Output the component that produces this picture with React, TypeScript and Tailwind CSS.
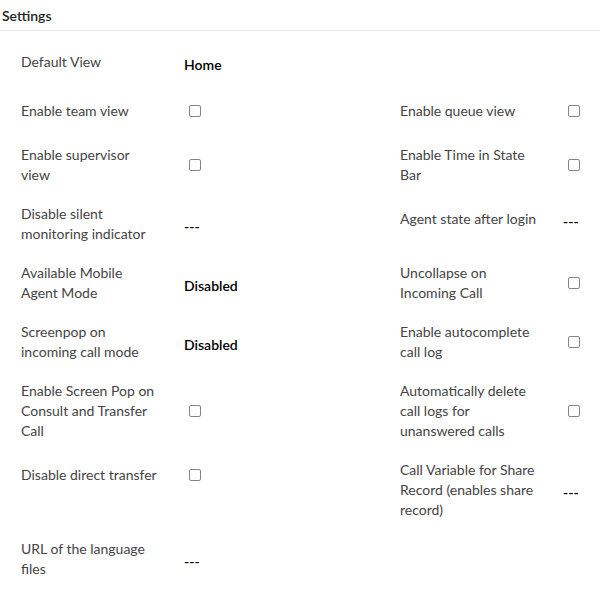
import React from 'react'

type Setting = {
  label: string
  value?: string
  checkbox?: boolean
}

const left: Setting[] = [
  { label: 'Default View', value: 'Home' },
  { label: 'Enable team view', checkbox: true },
  { label: 'Enable supervisor view', checkbox: true },
  { label: 'Disable silent monitoring indicator', value: '---' },
  { label: 'Available Mobile Agent Mode', value: 'Disabled' },
  { label: 'Screenpop on incoming call mode', value: 'Disabled' },
  { label: 'Enable Screen Pop on Consult and Transfer Call', checkbox: true },
  { label: 'Disable direct transfer', checkbox: true },
  { label: 'URL of the language files', value: '---' },
]

const right: (Setting | null)[] = [
  null,
  { label: 'Enable queue view', checkbox: true },
  { label: 'Enable Time in State Bar', checkbox: true },
  { label: 'Agent state after login', value: '---' },
  { label: 'Uncollapse on Incoming Call', checkbox: true },
  { label: 'Enable autocomplete call log', checkbox: true },
  { label: 'Automatically delete call logs for unanswered calls', checkbox: true },
  { label: 'Call Variable for Share Record (enables share record)', value: '---' },
  null,
]

function SettingItem({ item }: { item: Setting | null }) {
  if (!item) return <div />
  return (
    <div className="flex items-center min-h-[30px]">
      <div className="w-[138px] mr-[25px] shrink-0 text-[14px] leading-5 text-[#444444]">{item.label}</div>
      {item.checkbox ? (
        <span className="ml-[5px] block w-[12px] h-[12px] rounded-[2px] border border-[#858585] bg-white" />
      ) : (
        <span className="pt-[6px] text-[14px] leading-5 font-semibold text-black">{item.value}</span>
      )}
    </div>
  )
}

export default function App() {
  return (
    <div className="w-[600px] h-[592px] bg-white overflow-hidden" style={{ fontFamily: 'Lato, "Open Sans", sans-serif' }}>
      <div className="h-[31px] border-b border-[#e8e8e8] pl-[2px] flex items-center">
        <span className="text-[14px] font-semibold text-[#222222]">Settings</span>
      </div>
      <div className="grid grid-cols-[379px_1fr] gap-y-[19px] pl-[21px] pt-[16px] items-start">
        {left.map((l, i) => (
          <React.Fragment key={l.label}>
            <SettingItem item={l} />
            <SettingItem item={right[i]} />
          </React.Fragment>
        ))}
      </div>
    </div>
  )
}
